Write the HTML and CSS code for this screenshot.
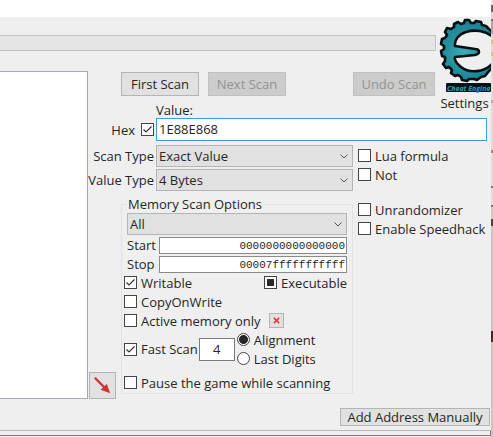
FILE: index.html
```html
<!DOCTYPE html>
<html lang="en">
<head>
<meta charset="utf-8">
<title>Cheat Engine</title>
<link rel="stylesheet" href="styles.css">
</head>
<body>
<main class="window">
  <div class="titlebar"></div>
  <div class="workspace">
    <div class="progress" role="progressbar" aria-label="Scan progress"></div>
    <a class="settings" href="#">
      <svg class="logo" viewBox="0 0 53 76" role="img" aria-label="Cheat Engine logo">
        <defs>
          <radialGradient id="teal" gradientUnits="userSpaceOnUse" cx="26" cy="34" r="34">
            <stop offset="0" stop-color="#3cadbb"/>
            <stop offset="0.5" stop-color="#25919f"/>
            <stop offset="1" stop-color="#1b7f91"/>
          </radialGradient>
        </defs>
        <path d="M54 14 L48 8 L44 7 L43 4 L38 3 L36 5 L33 5 L31 2 L27 2 L26 5 L23 6 L20 4 L16 6 L16 9 L13 11 L9 10 L7 14 L9 17 L7 20 L4 21 L3 26 L6 28 L6 31 L3 33 L4 38 L7 39 L7 43 L5 46 L8 50 L11 49 L14 52 L13 55 L17 58 L20 57 L23 59 L24 62 L29 63 L31 61 L36 61 L39 62 L43 59 L47 58 L51 53 L54 50 L54 46 C46 54 32 56 23 49 C18 45 16 42 17 39 L37 37 Q41 36 41 34 Q41 31 37 31 L17 28 C16 22 21 16 28 14 C37 11 47 13 54 18 Z" fill="url(#teal)" stroke="#061013" stroke-width="2.6" stroke-linejoin="round"/>
        <rect x="8" y="65" width="45" height="9" rx="1" fill="#061418"/>
        <text x="9" y="73" class="logo-text">Cheat Engine</text>
      </svg>
      <span>Settings</span>
    </a>
    <div class="results"></div>
    <div class="scan-head">
      <div class="scan-buttons">
        <button type="button">First Scan</button>
        <button type="button" disabled>Next Scan</button>
        <button type="button" class="undo" disabled>Undo Scan</button>
      </div>
      <label class="value-label" for="value">Value:</label>
    </div>
    <div class="form">
      <div class="value-row">
        <label class="hex">Hex <input type="checkbox" checked></label>
        <input class="value" id="value" type="text" value="1E88E868">
      </div>
      <div class="columns">
        <div class="left">
          <div class="types">
            <label for="scan-type">Scan Type</label>
            <select id="scan-type"><option>Exact Value</option></select>
            <label for="value-type">Value Type</label>
            <select id="value-type"><option>4 Bytes</option></select>
          </div>
          <div class="memory">
            <button type="button" class="arrow" aria-label="Add selected">
              <svg viewBox="0 0 26 26"><path d="M5 5 L16 16" stroke="#d23434" stroke-width="2.4"/><path d="M21 21 L11 17.5 L17.5 11.5 Z" fill="#d23434"/></svg>
            </button>
            <fieldset class="options">
              <legend>Memory Scan Options</legend>
              <select aria-label="Memory region"><option>All</option></select>
              <div class="range"><label for="start">Start</label><input id="start" type="text" value="0000000000000000"></div>
              <div class="range"><label for="stop">Stop</label><input id="stop" type="text" value="00007fffffffffff"></div>
              <div class="checks">
                <label class="check"><input type="checkbox" checked>Writable</label>
                <label class="check"><input type="checkbox" class="mixed">Executable</label>
              </div>
              <label class="check"><input type="checkbox">CopyOnWrite</label>
              <div class="active">
                <label class="check"><input type="checkbox">Active memory only</label>
                <button type="button" class="clear" aria-label="Clear"><svg viewBox="0 0 8 8"><path d="M1 1 L7 7 M7 1 L1 7" stroke="#f0313d" stroke-width="1.7"/></svg></button>
              </div>
              <div class="fast">
                <label class="check"><input type="checkbox" checked>Fast Scan</label>
                <input class="step" type="text" value="4" aria-label="Fast scan step">
                <div class="radios">
                  <label class="check"><input type="radio" name="mode" checked>Alignment</label>
                  <label class="check"><input type="radio" name="mode">Last Digits</label>
                </div>
              </div>
              <label class="check pause"><input type="checkbox">Pause the game while scanning</label>
            </fieldset>
          </div>
        </div>
        <div class="right">
          <label class="check"><input type="checkbox">Lua formula</label>
          <label class="check"><input type="checkbox">Not</label>
          <label class="check spaced"><input type="checkbox">Unrandomizer</label>
          <label class="check"><input type="checkbox">Enable Speedhack</label>
        </div>
      </div>
    </div>
  </div>
  <div class="footer"><button type="button">Add Address Manually</button></div>
  <div class="table-edge"></div>
</main>
<div class="desktop-edge"></div>
</body>
</html>
```
FILE: styles.css
```css
* { box-sizing: border-box; }

body {
  margin: 0;
  display: flex;
  min-height: 100vh;
  background: #efefef;
  color: #262626;
  font: 13px/18px "Open Sans", sans-serif;
}

button, input, select { font: inherit; color: inherit; margin: 0; }

.window { flex: 1; min-width: 0; display: flex; flex-direction: column; }
.titlebar { height: 17px; background: #fff; }

.desktop-edge {
  width: 2px;
  background: linear-gradient(#e4e4e4 5px, #5b6b70 5px 12px, #d8d8d8 12px 19px, #777 19px 21px, #aaa 21px 34px, #ddd 34px 40px, #d8c860 40px 44px, #ddd 44px 52px, #d8c860 52px 56px, #ddd 56px 100px, #dd9a9a 100px 103px, #ddd 103px 150px, #b98a50 150px 153px, #ddd 153px 186px, #777 186px 188px, #ddd 188px 205px, #777 205px 207px, #ccc 207px 219px, #544238 219px 226px, #c6c6c6 226px 331px, #4a2a20 331px 342px, #c6c6c6 342px);
}

.workspace {
  display: grid;
  grid-template-columns: minmax(0, 1fr) 350px 53px;
  grid-template-rows: 54px 47px auto;
}

.progress {
  grid-area: 1 / 1 / 2 / 3;
  height: 16px;
  margin: 18px 2px 0 0;
  background: #e5e5e5;
  border: 1px solid #c3c3c3;
  border-left: 0;
}

.settings {
  grid-area: 1 / 3 / 3 / 4;
  display: flex;
  flex-direction: column;
  align-items: center;
  color: inherit;
  text-decoration: none;
  padding-top: 1px;
}
.logo { width: 53px; height: 76px; flex: none; }
.logo-text { font: italic bold 7px "Open Sans", sans-serif; fill: #2ba3b3; }

.results {
  grid-area: 2 / 1 / 4 / 2;
  background: #fff;
  border: 1px solid #a5a9b2;
  border-left: 0;
}

.scan-head { grid-area: 2 / 2 / 3 / 3; padding: 1px 3px 0 33px; }
.scan-buttons { display: flex; gap: 9px; }
button { background: #e1e1e1; border: 1px solid #b5b5b5; padding: 0; }
.scan-buttons button { width: 78px; height: 24px; }
.scan-buttons .undo { width: 82px; margin-left: auto; }
button:disabled { background: #cccccc; border-color: #c0c0c0; color: #939393; }
.value-label { display: block; padding: 5px 0 0 35px; }

.form { grid-area: 3 / 2 / 4 / 4; }
.value-row { display: flex; padding-right: 4px; }
.hex { display: flex; align-items: center; justify-content: flex-end; gap: 6px; width: 68px; padding-right: 2px; }
.value { flex: 1; min-width: 0; height: 23px; border: 1px solid #3d9be9; background: #fff; padding: 0 2px 2px; outline: 0; }

input[type="checkbox"], input[type="radio"] {
  appearance: none;
  flex: none;
  width: 13px;
  height: 13px;
  border: 1px solid #444;
  background: #fff;
}
input[type="radio"] { border-radius: 50%; }
input[type="checkbox"]:checked {
  background: #fff url("data:image/svg+xml,%3Csvg xmlns='http://www.w3.org/2000/svg' viewBox='0 0 11 11'%3E%3Cpath d='M1.5 5.5 4 8 9.5 2.5' fill='none' stroke='%23333' stroke-width='1.2'/%3E%3C/svg%3E");
}
input.mixed { background: #2b2b2b; box-shadow: inset 0 0 0 2px #fff; }
input[type="radio"]:checked { background: radial-gradient(circle, #262626 0 4px, #fff 5px); }

.columns { display: flex; gap: 5px; }
.left { width: 265px; flex: none; }
.types {
  display: grid;
  grid-template-columns: 66px 1fr;
  gap: 2px;
  padding-top: 4px;
  align-items: center;
}
.types label { white-space: nowrap; justify-self: end; }
select {
  appearance: none;
  height: 22px;
  width: 100%;
  padding: 0 2px;
  border: 1px solid #b5b5b5;
  border-radius: 0;
  background: #e1e1e1 url("data:image/svg+xml,%3Csvg xmlns='http://www.w3.org/2000/svg' viewBox='0 0 8 5'%3E%3Cpath d='M.5 .5 4 4 7.5 .5' fill='none' stroke='%23555'/%3E%3C/svg%3E") no-repeat right 4px center / 8px 5px;
}

.memory { display: flex; align-items: flex-end; gap: 5px; padding-top: 4px; }
.arrow { width: 27px; height: 27px; margin-left: 1px; flex: none; }
.arrow svg { display: block; }
.options {
  flex: 1;
  min-width: 0;
  margin: 0 0 5px;
  padding: 0 5px 1px;
  border: 1px solid #e2e2e2;
}
.options legend { padding: 0 1px; line-height: 18px; }
.range { display: flex; justify-content: space-between; padding-top: 2px; }
.range label { line-height: 17px; }
.range input {
  width: 188px;
  height: 17px;
  padding: 0 1px;
  border: 1px solid #8a8a8a;
  background: #fff;
  text-align: right;
  font: 11px "Liberation Mono", monospace;
}
.check { display: flex; align-items: center; gap: 4px; height: 19px; white-space: nowrap; }
.options .check { margin-left: -3px; }
.checks { display: flex; justify-content: space-between; }
.active, .fast { display: flex; align-items: center; }
.clear { width: 15px; height: 15px; margin-left: 8px; padding: 3px; }
.clear svg { display: block; }
.step { width: 36px; height: 23px; margin: 0 2px 0 1px; border: 1px solid #7a7a7a; text-align: center; background: #fff; padding: 0; }
.options .radios .check { margin: 0; }
.pause { margin-top: 5px; }

.right { padding-top: 5px; }
.right .spaced { margin-top: 16px; }

.footer { display: flex; justify-content: flex-end; padding: 9px 1px 4px 0; }
.footer button { width: 150px; height: 18px; line-height: 16px; }
.table-edge { height: 6px; border-top: 1px solid #b9b9b9; border-bottom: 1px solid #7c7c7c; border-right: 1px solid #7c7c7c; }
```
